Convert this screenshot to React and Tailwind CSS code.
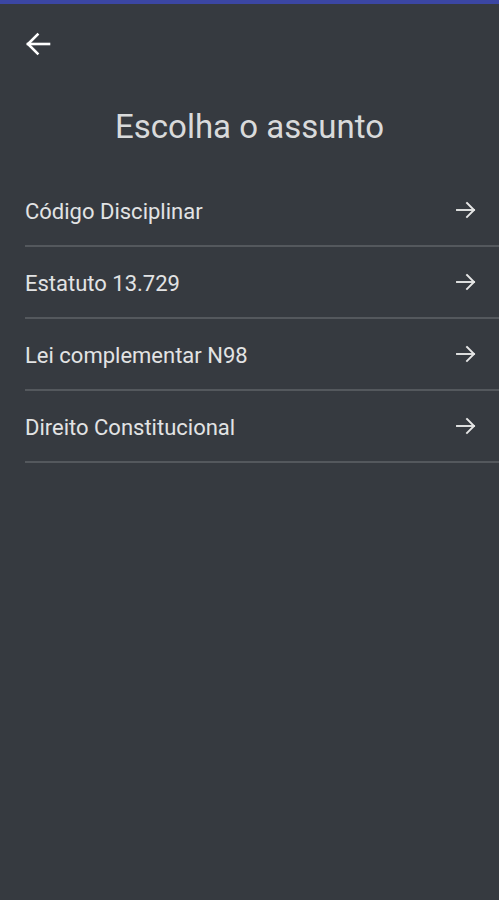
import React from "react";

const topics = [
  "Código Disciplinar",
  "Estatuto 13.729",
  "Lei complementar N98",
  "Direito Constitucional",
];

const BackArrow = () => (
  <svg width="26" height="26" viewBox="0 0 26 26" fill="none" stroke="#ffffff" strokeWidth="2.6" strokeLinecap="square">
    <path d="M24 13H3" />
    <path d="M12.5 3.5L3 13l9.5 9.5" />
  </svg>
);

const RowArrow = () => (
  <svg width="22" height="22" viewBox="0 0 22 22" fill="none" stroke="#e6e6e6" strokeWidth="1.9" strokeLinecap="square">
    <path d="M2 11h17" />
    <path d="M12 4l7 7-7 7" />
  </svg>
);

export default function App() {
  return (
    <div className="min-h-[900px] w-full bg-[#363a40]" style={{ fontFamily: "Roboto, 'Noto Sans', sans-serif" }}>
      <div className="h-[4px] bg-[#3b46a3]" />
      <div className="pl-[25px] pt-[27px]">
        <BackArrow />
      </div>
      <h1 className="mt-[50px] text-center text-[33px] leading-[40px] font-normal text-[#d9dadb]">
        Escolha o assunto
      </h1>
      <div className="mt-[28px] ml-[25px]">
        {topics.map((t) => (
          <div
            key={t}
            className="flex h-[72px] items-center justify-between border-b-2 border-[#54585d] pr-[22px]"
          >
            <span className="text-[22px] leading-[26px] text-[#e2e3e4] pt-[3px]">{t}</span>
            <RowArrow />
          </div>
        ))}
      </div>
    </div>
  );
}
